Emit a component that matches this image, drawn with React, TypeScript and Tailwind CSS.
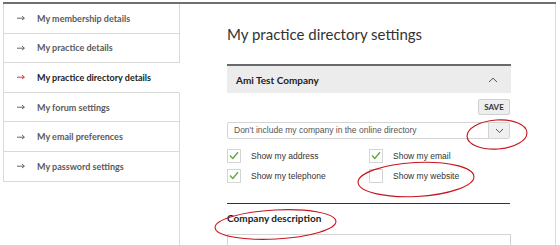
import React from "react";

const items = [
  "My membership details",
  "My practice details",
  "My practice directory details",
  "My forum settings",
  "My email preferences",
  "My password settings",
];

function Arrow({ active }: { active: boolean }) {
  const c = active ? "#d0202a" : "#555";
  return (
    <svg width="8" height="6" viewBox="0 0 8 6" className="shrink-0">
      <path d="M0 3.2 H7.2" stroke={c} strokeWidth="0.9" fill="none" />
      <path d="M5 1 L7.4 3.2 L5 5" stroke={c} strokeWidth="0.9" fill="none" />
    </svg>
  );
}

function Check({ checked, label }: { checked: boolean; label: string }) {
  return (
    <div className="flex items-center h-[14px]">
      <div className="w-[14px] h-[14px] border border-[#d4d4d4] bg-white flex items-center justify-center shrink-0">
        {checked && (
          <svg width="10" height="9" viewBox="0 0 10 9">
            <path d="M1 4.6 L3.8 7.4 L9 1.2" stroke="#62a542" strokeWidth="1.4" fill="none" />
          </svg>
        )}
      </div>
      <span className="ml-[10px] text-[8.5px] leading-none text-[#333] font-['Liberation_Sans',Arial,sans-serif]">
        {label}
      </span>
    </div>
  );
}

export default function App() {
  return (
    <div className="relative h-[245px] w-[560px] overflow-hidden bg-white pt-[2px] pl-[3px] font-['Lato',sans-serif]">
      <div className="flex w-[553px] h-[260px] border-t-2 border-[#707070]">
        <div className="w-[177px] flex flex-col shrink-0">
          {items.map((t, i) => {
            const active = i === 2;
            return (
              <div
                key={t}
                className={`h-[29.6px] flex items-center border-l border-b border-r border-[#d9d9d9] pl-[13px] ${
                  active ? "border-r-white" : ""
                }`}
              >
                <Arrow active={active} />
                <span
                  className={`ml-[12px] text-[9px] font-bold leading-none ${
                    active ? "text-[#222]" : "text-[#5a5a5a]"
                  }`}
                >
                  {t}
                </span>
              </div>
            );
          })}
          <div className="flex-1 border-r border-[#d9d9d9]" />
        </div>
        <div className="flex-1 border-r border-[#d9d9d9] pl-[47px] pr-[44px] flex flex-col">
          <h1 className="mt-[21px] text-[15px] leading-[18px] text-[#333] font-normal">
            My practice directory settings
          </h1>
          <div className="mt-[21px] h-[31px] border-t-2 border-[#6a6a6a] bg-[#ececec] flex items-center justify-between pl-[9px] pr-[13px]">
            <span className="text-[10px] font-bold text-[#222] leading-none">Ami Test Company</span>
            <svg width="10" height="6" viewBox="0 0 10 6">
              <path d="M1 5 L5 1.2 L9 5" stroke="#555" strokeWidth="1" fill="none" />
            </svg>
          </div>
          <div className="flex justify-end mt-[6px]">
            <div className="h-[16px] w-[32px] mr-[1px] rounded-[2px] border border-[#d0d0d0] bg-[#eeeeee] flex items-center justify-center text-[8px] font-bold text-[#333] leading-none">
              SAVE
            </div>
          </div>
          <div className="mt-[7px] h-[18px] mr-[1px] border border-[#d4d4d4] rounded-[2px] flex items-stretch">
            <div className="flex-1 flex items-center pl-[6px] text-[8.5px] text-[#555] leading-none font-['Liberation_Sans',Arial,sans-serif]">
              Don't include my company in the online directory
            </div>
            <div className="w-[21px] bg-[#f0f0f0] border-l border-[#d4d4d4] flex items-center justify-center">
              <svg width="9" height="6" viewBox="0 0 9 6">
                <path d="M1 1 L4.5 4.6 L8 1" stroke="#555" strokeWidth="1" fill="none" />
              </svg>
            </div>
          </div>
          <div className="mt-[10px] grid grid-cols-2 gap-y-[6px]">
            <Check checked label="Show my address" />
            <Check checked label="Show my email" />
            <Check checked label="Show my telephone" />
            <Check checked={false} label="Show my website" />
          </div>
          <div className="mt-[20px] h-px bg-[#333] mr-[1px]" />
          <div className="mt-[9px] text-[10px] font-bold text-[#222] leading-none">Company description</div>
          <div className="mt-[11px] h-[30px] border border-[#d4d4d4]" />
        </div>
      </div>
      <svg
        className="absolute left-0 top-0 pointer-events-none"
        width="560"
        height="245"
        viewBox="0 0 560 245"
      >
        <ellipse cx="497" cy="134.5" rx="30" ry="14.5" stroke="#c8141e" strokeWidth="1.1" fill="none" transform="rotate(-4 497 134.5)" />
        <ellipse cx="416" cy="179.5" rx="58" ry="17" stroke="#c8141e" strokeWidth="1.1" fill="none" transform="rotate(-3 416 179.5)" />
        <ellipse cx="275.5" cy="224.5" rx="60.5" ry="14.5" stroke="#c8141e" strokeWidth="1.1" fill="none" transform="rotate(-3 275.5 224.5)" />
      </svg>
    </div>
  );
}
